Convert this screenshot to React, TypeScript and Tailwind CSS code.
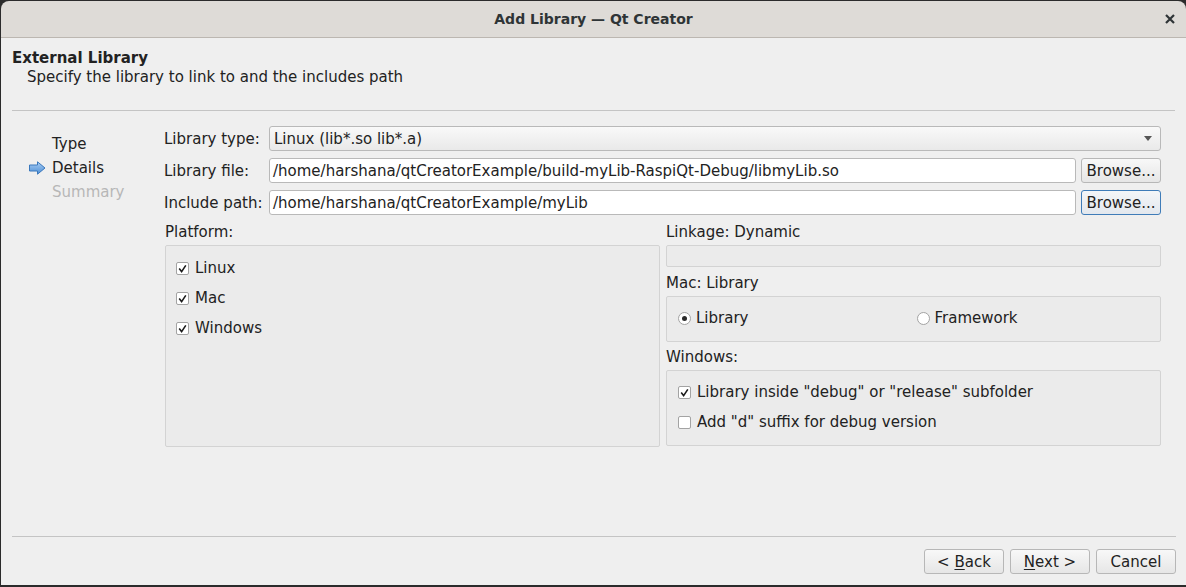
import React from 'react';

const Check: React.FC<{ checked?: boolean }> = ({ checked }) => (
  <span className="w-[13px] h-[13px] shrink-0 bg-white border border-[#a3a3a3] rounded-[2px] flex items-center justify-center">
    {checked && (
      <svg width="9" height="9" viewBox="0 0 9 9">
        <path d="M1.2 4.6 L3.6 7.6 L7.8 1.4" fill="none" stroke="#1b1b1b" strokeWidth="1.6" />
      </svg>
    )}
  </span>
);

const Radio: React.FC<{ checked?: boolean }> = ({ checked }) => (
  <span className="w-[13px] h-[13px] shrink-0 bg-white border border-[#a3a3a3] rounded-full flex items-center justify-center">
    {checked && <span className="w-[5px] h-[5px] rounded-full bg-[#2b2b2b]" />}
  </span>
);

const Button: React.FC<{ children: React.ReactNode; focus?: boolean; className?: string }> = ({
  children,
  focus,
  className = 'w-[80px]',
}) => (
  <div
    className={`${className} h-[25px] shrink-0 rounded-[3px] border flex items-center justify-center ${
      focus
        ? 'border-[#3f7cb8] bg-gradient-to-b from-[#f4f6f8] to-[#e3e8ee]'
        : 'border-[#b7b7b7] bg-gradient-to-b from-[#f8f8f8] to-[#e6e6e6]'
    }`}
  >
    {children}
  </div>
);

const Field: React.FC<{ value: string }> = ({ value }) => (
  <div className="flex-1 h-[25px] bg-white border border-[#b9b9b9] rounded-[3px] flex items-center pl-[3px] overflow-hidden whitespace-nowrap">
    {value}
  </div>
);

export default function App() {
  return (
    <div className="w-[1186px] h-[587px] bg-[#2b2b2b] pl-px pt-px pb-[2px] overflow-hidden font-['DejaVu_Sans',sans-serif] text-[15px] leading-[18px] text-[#222]">
      <div className="h-full flex flex-col rounded-t-[8px] overflow-hidden">
        {/* Title bar */}
        <div className="h-[37px] shrink-0 bg-[#dedbd7] border-b border-[#bcb7b1] flex items-center relative">
          <div className="w-full text-center font-bold text-[14px] text-[#2e3436]">Add Library — Qt Creator</div>
          <svg className="absolute right-[11px] top-[13px]" width="10" height="10" viewBox="0 0 10 10">
            <path d="M1 1 L9 9 M9 1 L1 9" stroke="#2e3436" strokeWidth="2.2" />
          </svg>
        </div>

        {/* Body */}
        <div className="flex-1 bg-[#efefef] flex flex-col">
          <div className="pl-[11px] pt-[11px]">
            <div className="font-bold">External Library</div>
            <div className="pl-[15px] mt-px">Specify the library to link to and the includes path</div>
          </div>
          <div className="ml-[11px] mr-[11px] mt-[24px] h-px bg-[#c4c4c4]" />

          <div className="flex-1 flex">
            {/* Sidebar */}
            <div className="w-[163px] shrink-0 pt-[21px] flex flex-col">
              <div className="h-[24px] flex items-center pl-[51px]">Type</div>
              <div className="h-[24px] flex items-center relative pl-[51px]">
                <svg className="absolute left-[28px] top-[5px]" width="17" height="14" viewBox="0 0 17 14">
                  <defs>
                    <linearGradient id="ar" x1="0" y1="0" x2="0" y2="1">
                      <stop offset="0" stopColor="#a9cdf3" />
                      <stop offset="1" stopColor="#4d8fd6" />
                    </linearGradient>
                  </defs>
                  <path d="M0.5 4 H8.5 V0.8 L16 7 L8.5 13.2 V10 H0.5 Z" fill="url(#ar)" stroke="#3a78bd" strokeWidth="1" />
                </svg>
                Details
              </div>
              <div className="h-[24px] flex items-center pl-[51px] text-[#b7b7b7]">Summary</div>
            </div>

            {/* Form */}
            <div className="flex-1 pr-[25px] pt-[15px] flex flex-col">
              <div className="flex items-center h-[25px]">
                <div className="w-[105px] shrink-0">Library type:</div>
                <div className="flex-1 h-[25px] border border-[#b9b9b9] rounded-[3px] bg-gradient-to-b from-[#f9f9f9] to-[#e9e9e9] flex items-center pl-[4px] pr-[8px]">
                  <span className="flex-1">Linux (lib*.so lib*.a)</span>
                  <svg width="8" height="5" viewBox="0 0 8 5">
                    <path d="M0 0 H8 L4 5 Z" fill="#555" />
                  </svg>
                </div>
              </div>
              <div className="flex items-center h-[25px] mt-[7px]">
                <div className="w-[105px] shrink-0">Library file:</div>
                <Field value="/home/harshana/qtCreatorExample/build-myLib-RaspiQt-Debug/libmyLib.so" />
                <div className="ml-[5px]">
                  <Button>Browse...</Button>
                </div>
              </div>
              <div className="flex items-center h-[25px] mt-[7px]">
                <div className="w-[105px] shrink-0">Include path:</div>
                <Field value="/home/harshana/qtCreatorExample/myLib" />
                <div className="ml-[5px]">
                  <Button focus>Browse...</Button>
                </div>
              </div>

              <div className="flex gap-[6px] mt-[8px] pl-px">
                {/* Platform */}
                <div className="flex-1 flex flex-col">
                  <div className="h-[18px]">Platform:</div>
                  <div className="mt-[4px] h-[202px] border border-[#d3d3d3] rounded-[2px] bg-[#ebebeb] pl-[10px] pt-[13px] flex flex-col gap-[12px]">
                    {['Linux', 'Mac', 'Windows'].map((p) => (
                      <div key={p} className="flex items-center gap-[6px] h-[18px]">
                        <Check checked />
                        <span>{p}</span>
                      </div>
                    ))}
                  </div>
                </div>

                {/* Right column */}
                <div className="flex-1 flex flex-col">
                  <div className="h-[18px]">Linkage: Dynamic</div>
                  <div className="mt-[4px] h-[22px] border border-[#d3d3d3] rounded-[2px] bg-[#ebebeb]" />
                  <div className="h-[18px] mt-[7px]">Mac: Library</div>
                  <div className="mt-[4px] h-[46px] border border-[#d3d3d3] rounded-[2px] bg-[#ebebeb] px-[11px] grid grid-cols-2 gap-[6px] items-center">
                    <div className="flex items-center gap-[5px] -mt-[2px]">
                      <Radio checked />
                      <span>Library</span>
                    </div>
                    <div className="flex items-center gap-[5px] -mt-[2px]">
                      <Radio />
                      <span>Framework</span>
                    </div>
                  </div>
                  <div className="h-[18px] mt-[6px]">Windows:</div>
                  <div className="mt-[4px] h-[76px] border border-[#d3d3d3] rounded-[2px] bg-[#ebebeb] pl-[11px] pt-[12px] flex flex-col gap-[12px]">
                    <div className="flex items-center gap-[6px] h-[18px]">
                      <Check checked />
                      <span>Library inside "debug" or "release" subfolder</span>
                    </div>
                    <div className="flex items-center gap-[6px] h-[18px]">
                      <Check />
                      <span>Add "d" suffix for debug version</span>
                    </div>
                  </div>
                </div>
              </div>
            </div>
          </div>

          {/* Footer */}
          <div className="ml-[11px] mr-[10px] h-px bg-[#c4c4c4]" />
          <div className="flex justify-end gap-[6px] pr-[10px] pt-[12px] pb-[11px]">
            <Button>
              <span>
                &lt; <span className="underline underline-offset-2">B</span>ack
              </span>
            </Button>
            <Button>
              <span>
                <span className="underline underline-offset-2">N</span>ext &gt;
              </span>
            </Button>
            <Button>Cancel</Button>
          </div>
        </div>
      </div>
    </div>
  );
}
